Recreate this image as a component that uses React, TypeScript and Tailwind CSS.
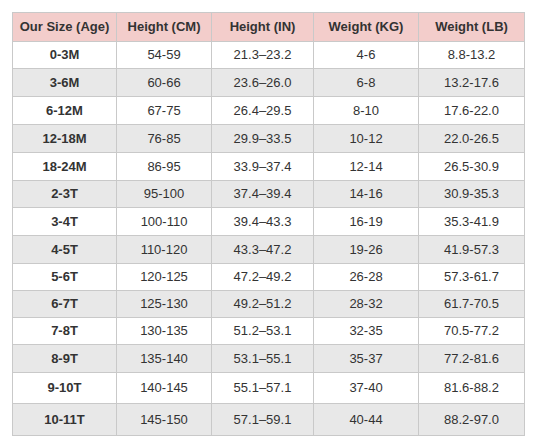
import React from 'react';

const rows: { size: string; cm: string; inch: string; kg: string; lb: string; h: string }[] = [
  { size: '0-3M', cm: '54-59', inch: '21.3–23.2', kg: '4-6', lb: '8.8-13.2', h: 'h-[27px]' },
  { size: '3-6M', cm: '60-66', inch: '23.6–26.0', kg: '6-8', lb: '13.2-17.6', h: 'h-[28px]' },
  { size: '6-12M', cm: '67-75', inch: '26.4–29.5', kg: '8-10', lb: '17.6-22.0', h: 'h-[28px]' },
  { size: '12-18M', cm: '76-85', inch: '29.9–33.5', kg: '10-12', lb: '22.0-26.5', h: 'h-[28px]' },
  { size: '18-24M', cm: '86-95', inch: '33.9–37.4', kg: '12-14', lb: '26.5-30.9', h: 'h-[28px]' },
  { size: '2-3T', cm: '95-100', inch: '37.4–39.4', kg: '14-16', lb: '30.9-35.3', h: 'h-[27px]' },
  { size: '3-4T', cm: '100-110', inch: '39.4–43.3', kg: '16-19', lb: '35.3-41.9', h: 'h-[28px]' },
  { size: '4-5T', cm: '110-120', inch: '43.3–47.2', kg: '19-26', lb: '41.9-57.3', h: 'h-[28px]' },
  { size: '5-6T', cm: '120-125', inch: '47.2–49.2', kg: '26-28', lb: '57.3-61.7', h: 'h-[27px]' },
  { size: '6-7T', cm: '125-130', inch: '49.2–51.2', kg: '28-32', lb: '61.7-70.5', h: 'h-[27px]' },
  { size: '7-8T', cm: '130-135', inch: '51.2–53.1', kg: '32-35', lb: '70.5-77.2', h: 'h-[27px]' },
  { size: '8-9T', cm: '135-140', inch: '53.1–55.1', kg: '35-37', lb: '77.2-81.6', h: 'h-[28px]' },
  { size: '9-10T', cm: '140-145', inch: '55.1–57.1', kg: '37-40', lb: '81.6-88.2', h: 'h-[31px]' },
  { size: '10-11T', cm: '145-150', inch: '57.1–59.1', kg: '40-44', lb: '88.2-97.0', h: 'h-[32px]' },
];

const headers = ['Our Size (Age)', 'Height (CM)', 'Height (IN)', 'Weight (KG)', 'Weight (LB)'];

const cell = 'border border-[#c9c9c9] p-0 text-center align-middle';

export default function App() {
  return (
    <div className="w-[536px] h-[446px] bg-white p-3 font-['Liberation_Sans',Arial,sans-serif] text-[13px] text-[#333333]">
      <table className="w-[512px] table-fixed border-collapse">
        <colgroup>
          <col className="w-[104px]" />
          <col className="w-[95px]" />
          <col className="w-[102px]" />
          <col className="w-[105px]" />
          <col className="w-[106px]" />
        </colgroup>
        <thead>
          <tr className="h-[29px] bg-[#f3cdcb]">
            {headers.map((t) => (
              <th key={t} className={`${cell} font-bold`}>
                {t}
              </th>
            ))}
          </tr>
        </thead>
        <tbody>
          {rows.map((r, i) => (
            <tr key={r.size} className={`${r.h} ${i % 2 === 1 ? 'bg-[#e8e8e8]' : 'bg-white'}`}>
              <td className={`${cell} font-bold`}>{r.size}</td>
              <td className={cell}>{r.cm}</td>
              <td className={cell}>{r.inch}</td>
              <td className={cell}>{r.kg}</td>
              <td className={cell}>{r.lb}</td>
            </tr>
          ))}
        </tbody>
      </table>
    </div>
  );
}
